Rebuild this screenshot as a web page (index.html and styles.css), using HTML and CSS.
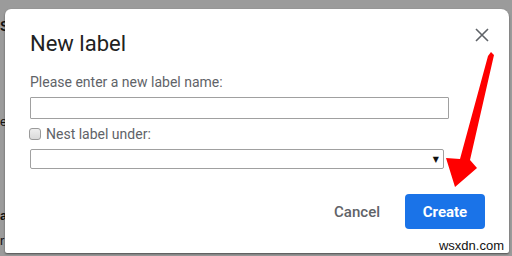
FILE: index.html
```html
<!DOCTYPE html>
<html>
<head>
<meta charset="utf-8">
<link rel="stylesheet" href="styles.css">
</head>
<body>
<div class="backdrop">
  <div class="bg-line bg-s">S</div>
  <div class="bg-line bg-e">e</div>
  <div class="bg-line bg-a">a</div>
  <div class="bg-line bg-r">r</div>
</div>
<div class="dialog">
  <div class="header">
    <h1 class="title">New label</h1>
    <button class="close" aria-label="Close">
      <svg width="14" height="14" viewBox="0 0 14 14"><path d="M1 1L13 13M13 1L1 13" stroke="#5f6368" stroke-width="1.6" fill="none"/></svg>
    </button>
  </div>
  <label class="field-label">Please enter a new label name:</label>
  <div class="input"></div>
  <div class="nest-row">
    <span class="checkbox"></span>
    <span class="nest-text">Nest label under:</span>
  </div>
  <div class="select"><span class="caret">▼</span></div>
  <div class="footer">
    <button class="btn-cancel">Cancel</button>
    <button class="btn-create">Create</button>
  </div>
  <div class="watermark">wsxdn.com</div>
</div>
<svg class="arrow" width="512" height="256" viewBox="0 0 512 256">
  <polygon points="491,52 494,55 470,160 477,168 455,187 446,158 460,159 488,56" fill="#ff0000"/>
</svg>
</body>
</html>
```
FILE: styles.css
```css
html, body {
  margin: 0;
  padding: 0;
}
body {
  width: 512px;
  height: 256px;
  background: #9b9b9b;
  position: relative;
  overflow: hidden;
  font-family: Roboto, "Liberation Sans", Arial, sans-serif;
}
.backdrop {
  display: flex;
  flex-direction: column;
  font-family: "Liberation Sans", Arial, sans-serif;
  color: #111;
  font-size: 13px;
  line-height: 13px;
}
.bg-line {
  margin-left: 0;
}
.bg-s { margin-top: 20px; font-weight: bold; font-size: 14px; }
.bg-e { margin-top: 82px; }
.bg-a { margin-top: 81px; font-weight: bold; }
.bg-r { margin-top: 12px; }
.dialog {
  position: absolute;
  left: 5px;
  top: 9px;
  width: 504px;
  height: 244px;
  box-sizing: border-box;
  background: #fff;
  border-radius: 6px 8px 2px 2px;
  box-shadow: 0 1px 2px rgba(0,0,0,0.5);
  padding: 21px 20px 0 25px;
  display: flex;
  flex-direction: column;
}
.header {
  display: flex;
  justify-content: space-between;
  align-items: flex-start;
}
.title {
  margin: 0;
  font-size: 22px;
  line-height: 28px;
  font-weight: 400;
  color: #222;
}
.close {
  border: 0;
  background: none;
  padding: 0;
  margin-top: -2px;
  width: 14px;
  height: 14px;
  display: flex;
}
.field-label {
  margin-top: 15px;
  font-size: 14px;
  line-height: 18px;
  color: #5f6368;
}
.input {
  margin-top: 6px;
  width: 419px;
  height: 22px;
  box-sizing: border-box;
  border: 1px solid #a0a0a0;
  border-radius: 1px;
}
.nest-row {
  margin-top: 6px;
  display: flex;
  align-items: center;
  height: 18px;
}
.checkbox {
  width: 12px;
  height: 12px;
  box-sizing: border-box;
  border: 1px solid #9a9a9a;
  border-radius: 3px;
  background: linear-gradient(#eeeeee, #d9d9d9);
  margin-left: -1px;
  margin-right: 5px;
}
.nest-text {
  font-size: 14px;
  line-height: 18px;
  color: #5f6368;
}
.select {
  margin-top: 6px;
  width: 414px;
  height: 20px;
  box-sizing: border-box;
  border: 1px solid #a0a0a0;
  border-radius: 2px;
  display: flex;
  justify-content: flex-end;
  align-items: center;
  padding-right: 4px;
}
.caret {
  font-size: 8px;
  color: #111;
  font-family: "DejaVu Sans", sans-serif;
}
.footer {
  margin-top: 25px;
  display: flex;
  justify-content: flex-end;
  align-items: center;
  gap: 9px;
  padding-right: 4px;
}
.btn-cancel {
  border: 0;
  background: none;
  font-family: Roboto, "Liberation Sans", sans-serif;
  font-size: 15px;
  font-weight: 500;
  color: #5f6368;
  padding: 0 16px;
  height: 35px;
}
.btn-create {
  border: 0;
  background: #1a73e8;
  color: #fff;
  font-family: Roboto, "Liberation Sans", sans-serif;
  font-size: 15px;
  font-weight: 700;
  width: 80px;
  height: 35px;
  border-radius: 4px;
  padding: 0;
}
.watermark {
  position: absolute;
  right: 2px;
  bottom: 0;
  background: #fff;
  font-family: "Liberation Sans", Arial, sans-serif;
  font-size: 13px;
  line-height: 14px;
  color: #111;
  padding: 0 3px;
}
.arrow {
  position: absolute;
  left: 0;
  top: 0;
}
```
